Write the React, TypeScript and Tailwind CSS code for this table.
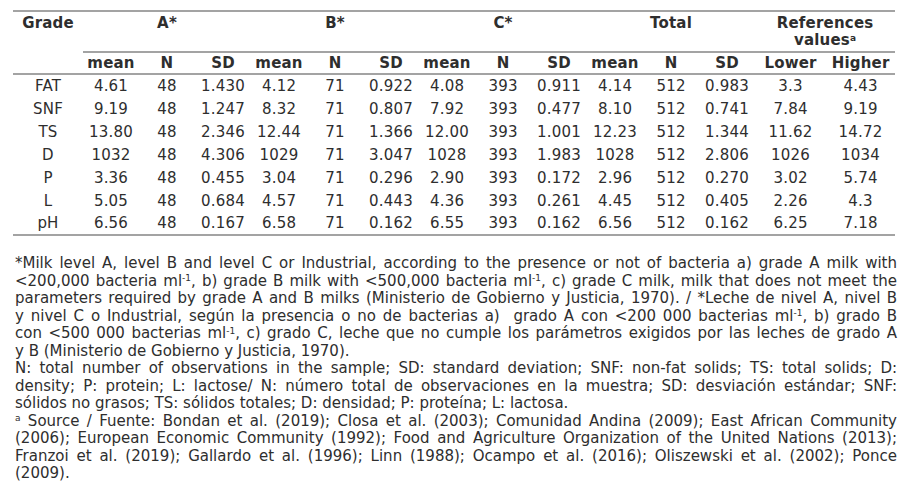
import React from 'react';

const GROUPS = ['A*', 'B*', 'C*', 'Total'];
const SUB = ['mean', 'N', 'SD'];

const ROWS: string[][] = [
  ['FAT', '4.61', '48', '1.430', '4.12', '71', '0.922', '4.08', '393', '0.911', '4.14', '512', '0.983', '3.3', '4.43'],
  ['SNF', '9.19', '48', '1.247', '8.32', '71', '0.807', '7.92', '393', '0.477', '8.10', '512', '0.741', '7.84', '9.19'],
  ['TS', '13.80', '48', '2.346', '12.44', '71', '1.366', '12.00', '393', '1.001', '12.23', '512', '1.344', '11.62', '14.72'],
  ['D', '1032', '48', '4.306', '1029', '71', '3.047', '1028', '393', '1.983', '1028', '512', '2.806', '1026', '1034'],
  ['P', '3.36', '48', '0.455', '3.04', '71', '0.296', '2.90', '393', '0.172', '2.96', '512', '0.270', '3.02', '5.74'],
  ['L', '5.05', '48', '0.684', '4.57', '71', '0.443', '4.36', '393', '0.261', '4.45', '512', '0.405', '2.26', '4.3'],
  ['pH', '6.56', '48', '0.167', '6.58', '71', '0.162', '6.55', '393', '0.162', '6.56', '512', '0.162', '6.25', '7.18'],
];

const Sup: React.FC<{ children: React.ReactNode }> = ({ children }) => (
  <sup className="text-[9px]">{children}</sup>
);

// one visual line of justified text, so the breaks match the print
const Line: React.FC<{ last?: boolean; children: React.ReactNode }> = ({ last, children }) => (
  <div className={last ? 'text-left whitespace-nowrap' : 'text-justify [text-align-last:justify] whitespace-nowrap'}>
    {children}
  </div>
);

const ml = <>ml<Sup>-1</Sup></>;

export default function App() {
  return (
    <div className="bg-white w-[924px] h-[497px] pt-[10px] pl-[13px] text-[#2e2e2e] text-[15px]" style={{ fontFamily: '"DejaVu Sans", Verdana, sans-serif' }}>
      <table className="table-fixed w-[882px] border-t-2 border-b-2 border-[#a3a3a3] tracking-[0.2px]">
        <colgroup>
          <col className="w-[70px]" />
          {Array.from({ length: 12 }).map((_, i) => (
            <col key={i} className="w-[56px]" />
          ))}
          <col className="w-[71px]" />
          <col className="w-[69px]" />
        </colgroup>
        <thead>
          <tr className="h-[41px] align-top font-bold">
            <th className="text-center pt-[3px] leading-[17px]">Grade</th>
            {GROUPS.map(g => (
              <th key={g} colSpan={3} className="text-center pt-[3px] leading-[17px] border-b-2 border-[#a3a3a3]">{g}</th>
            ))}
            <th colSpan={2} className="text-center pt-[3px] border-b-2 border-[#a3a3a3]">
              <div className="leading-[17px]">References</div>
              <div className="leading-[16px]">values<Sup>a</Sup></div>
            </th>
          </tr>
          <tr className="h-[22px] font-bold border-b-2 border-[#a3a3a3]">
            <th></th>
            {GROUPS.map(g =>
              SUB.map(s => (
                <th key={g + s} className="text-center leading-[18px]">{s}</th>
              ))
            )}
            <th className="text-center leading-[18px]">Lower</th>
            <th className="text-center leading-[18px]">Higher</th>
          </tr>
        </thead>
        <tbody>
          {ROWS.map(r => (
            <tr key={r[0]} className="h-[23px]">
              {r.map((v, i) => (
                <td key={i} className="text-center leading-[18px] p-0">{v}</td>
              ))}
            </tr>
          ))}
        </tbody>
      </table>

      <div className="w-[882px] mt-[19px] ml-[2px] leading-[17.5px]">
        <Line>*Milk level A, level B and level C or Industrial, according to the presence or not of bacteria a) grade A milk with</Line>
        <Line>&lt;200,000 bacteria {ml}, b) grade B milk with &lt;500,000 bacteria {ml}, c) grade C milk, milk that does not meet the</Line>
        <Line>parameters required by grade A and B milks (Ministerio de Gobierno y Justicia, 1970). / *Leche de nivel A, nivel B</Line>
        <Line>y nivel C o Industrial, según la presencia o no de bacterias a)&nbsp; grado A con &lt;200 000 bacterias {ml}, b) grado B</Line>
        <Line>con &lt;500 000 bacterias {ml}, c) grado C, leche que no cumple los parámetros exigidos por las leches de grado A</Line>
        <Line last>y B (Ministerio de Gobierno y Justicia, 1970).</Line>
        <Line>N: total number of observations in the sample; SD: standard deviation; SNF: non-fat solids; TS: total solids; D:</Line>
        <Line>density; P: protein; L: lactose/ N: número total de observaciones en la muestra; SD: desviación estándar; SNF:</Line>
        <Line last>sólidos no grasos; TS: sólidos totales; D: densidad; P: proteína; L: lactosa.</Line>
        <Line><Sup>a</Sup> Source / Fuente: Bondan et al. (2019); Closa et al. (2003); Comunidad Andina (2009); East African Community</Line>
        <Line>(2006); European Economic Community (1992); Food and Agriculture Organization of the United Nations (2013);</Line>
        <Line>Franzoi et al. (2019); Gallardo et al. (1996); Linn (1988); Ocampo et al. (2016); Oliszewski et al. (2002); Ponce</Line>
        <Line last>(2009).</Line>
      </div>
    </div>
  );
}
